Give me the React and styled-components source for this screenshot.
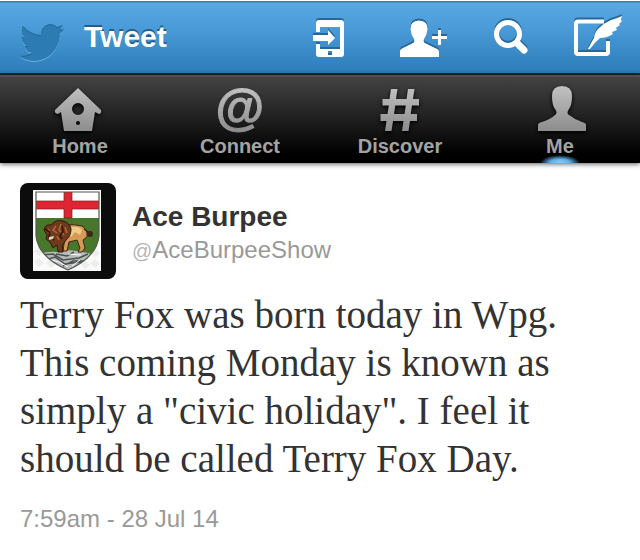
import React from "react";
import styled, { createGlobalStyle } from "styled-components";

const GlobalStyle = createGlobalStyle`
  *, *::before, *::after { box-sizing: border-box; }
  body {
    margin: 0;
    background: #fff;
    color: #333;
    font-family: "Liberation Sans", Arial, sans-serif;
  }
`;

const TopBar = styled.header`
  display: flex;
  align-items: center;
  height: 75px;
  padding: 0 17px 0 20px;
  border-top: 1px solid #fff;
  border-bottom: 2px solid #16283a;
  background: linear-gradient(#3d7f9c 0, #3d7f9c 1px, #5aa8e2 2px, #4b9cd9 35%, #2b7cb9 100%);
`;

const BirdIcon = styled.svg`
  width: 44px;
  height: 44px;
  margin-top: 12px;
  fill: #2d7bb3;
  overflow: visible;
  filter: drop-shadow(0 -1px 0 #246799) drop-shadow(0 1px 0 #68addd);
`;

const Title = styled.h1`
  margin: 0 auto 0 20px;
  color: #fff;
  font-size: 30px;
  line-height: 36px;
  text-shadow: 0 -2px 0 #245e8c;
`;

const Actions = styled.div`
  display: flex;
  gap: 47px;
`;

const IconButton = styled.button`
  display: flex;
  padding: 0;
  border: 0;
  background: none;
  color: #fff;
  cursor: pointer;

  svg {
    height: 40px;
    fill: currentColor;
    overflow: visible;
    filter: drop-shadow(0 -2px 0 #28679a);
  }
`;

const TabBar = styled.nav`
  display: grid;
  grid-template-columns: repeat(4, 1fr);
  height: 88px;
  border-top: 2px solid #4e5053;
  background: linear-gradient(#434343, #222 45%, #000 90%);
  box-shadow: 0 1px 5px rgba(0, 0, 0, 0.65);
`;

const Tab = styled.a`
  display: flex;
  flex-direction: column;
  align-items: center;
  padding-top: 9px;
  color: #a3a3a3;
  font-size: 20px;
  font-weight: bold;
  line-height: 24px;
  text-decoration: none;
  background: ${(p) =>
    p.$active
      ? "radial-gradient(ellipse 20px 8px at 50% 100%, #8bd0fb 0, #5eaee4 50%, transparent 100%)"
      : "none"};
`;

const TabIcon = styled.svg`
  width: 48px;
  height: 48px;
  overflow: visible;
  filter: drop-shadow(0 2px 2px #000);
`;

const AtSign = styled.span`
  height: 48px;
  font-size: 50px;
  line-height: 44px;
  background: linear-gradient(#c4c4c4, #898989);
  background-clip: text;
  color: transparent;
  -webkit-text-stroke: 1px transparent;
`;

const Tweet = styled.article`
  padding: 20px;
`;

const Author = styled.div`
  display: flex;
  align-items: center;
  gap: 16px;
`;

const Avatar = styled.svg`
  width: 96px;
  height: 96px;
  border-radius: 8px;
`;

const Names = styled.div`
  padding-top: 4px;
`;

const Name = styled.h2`
  margin: 0;
  font-size: 28px;
  line-height: 34px;
`;

const Handle = styled.a`
  display: block;
  color: #999;
  font-size: 24px;
  line-height: 32px;
  text-decoration: none;
`;

const HandleMark = styled.span`
  color: #b5b5b5;
  font-size: 20px;
`;

const Body = styled.p`
  margin: 12px 0 0;
  font-family: "Liberation Serif", Georgia, serif;
  font-size: 39px;
  line-height: 48px;
`;

const Time = styled.time`
  display: block;
  margin-top: 20px;
  color: #999;
  font-size: 24px;
  line-height: 32px;
`;

const PERSON =
  "M0 40V34Q0 32 3 31L13 26Q15 25 14 22Q11 18 10.500 12Q10 4 19 3.500Q28 4 27.500 12Q27 18 24 22Q23 25 25 26L35 31Q39 32 39 35V40Z";

function DeviceIcon() {
  return (
    <svg width="40" viewBox="0 0 40 40" aria-hidden="true">
      <path
        fillRule="evenodd"
        d="M3 15V6Q3 3 6 3H28Q31 3 31 6V37Q31 40 28 40H6Q3 40 3 37V27H7V32H27V10H7V15ZM15 34V38H19V34Z"
      />
      <path d="M0 18H15V13L22 21L15 28V24H0Z" />
    </svg>
  );
}

function AddPersonIcon() {
  return (
    <svg width="47" viewBox="0 0 47 40" aria-hidden="true">
      <path d={PERSON} />
      <path d="M38 13H41V19H47V22H41V28H38V22H32V19H38Z" />
    </svg>
  );
}

function SearchIcon() {
  return (
    <svg width="34" viewBox="0 0 34 40" aria-hidden="true">
      <circle cx="14" cy="17" r="11.500" fill="none" stroke="currentColor" strokeWidth="5" />
      <path d="M23 26L30 33" stroke="currentColor" strokeWidth="7" strokeLinecap="round" />
    </svg>
  );
}

function ComposeIcon() {
  return (
    <svg width="48" viewBox="0 0 48 40" aria-hidden="true">
      <path
        d="M29 4.500H3Q1 4.500 1 6.500V35Q1 37 3 37H31Q33 37 33 35V24"
        fill="none"
        stroke="currentColor"
        strokeWidth="4"
      />
      <path d="M13 32Q16 26 19 21Q20 14 24 11Q29 6 36 3Q43 1 47 -1L46 3L47 4L44 7L45 8L41 11L42 13L37 15L38 17Q32 21 25 21Q19 26 15 32Z" />
    </svg>
  );
}

function Silver() {
  return (
    <defs>
      <linearGradient id="silver" x1="0" y1="0" x2="0" y2="48" gradientUnits="userSpaceOnUse">
        <stop stopColor="#c2c2c2" />
        <stop offset="1" stopColor="#898989" />
      </linearGradient>
    </defs>
  );
}

function HomeIcon() {
  return (
    <TabIcon viewBox="0 0 48 48" aria-hidden="true">
      <Silver />
      <path
        fill="url(#silver)"
        fillRule="evenodd"
        d="M22 2L45 24Q46 27 43 28L39 26L36 45H8L5 26L2 28Q-2 27 -1 24ZM22 17A6 6 0 1 0 22 29A6 6 0 1 0 22 17ZM22 35A2 2 0 1 0 22 39A2 2 0 1 0 22 35Z"
      />
    </TabIcon>
  );
}

function HashIcon() {
  return (
    <TabIcon viewBox="0 0 48 48" aria-hidden="true">
      <path
        fill="url(#silver)"
        d="M15 3H21.500L20 13H30.500L32 3H38.500L37 13H43V19.500H36L34.700 28H41V35H34L32.500 45H26L27.500 35H17L15.500 45H9L10.500 35H4.500V28H11.500L12.800 19.500H6.500V13H13.500ZM19.300 19.500L18 28H28.500L29.800 19.500Z"
        fillRule="evenodd"
      />
    </TabIcon>
  );
}

function ProfileIcon() {
  return (
    <TabIcon viewBox="0 0 48 48" aria-hidden="true">
      <path
        fill="url(#silver)"
        d="M2 45V39Q2 37 6 36Q15 33 19 29Q22 27 19 23Q16 19 16 10Q16 0 26 0Q36 0 36 10Q36 19 33 23Q30 27 33 29Q38 33 46 36Q50 37 50 39V45Z"
      />
    </TabIcon>
  );
}

function CrestAvatar() {
  return (
    <Avatar viewBox="0 0 96 96" role="img" aria-label="Ace Burpee">
      <clipPath id="shield">
        <path d="M16 9H79V53Q77 74 48 87Q18 74 16 53Z" />
      </clipPath>
      <path fill="#0c0c0c" d="M0 0H96V96H0Z" />
      <path fill="#fafafa" d="M13 7H81V88H13Z" />
      <path fill="#ededed" d="M14 68l5-4 5 5-5 4ZM14 79l5-4 5 5-5 4ZM26 80l5-4 5 5-5 4ZM70 69l5-4 5 5-5 4ZM70 80l5-4 5 5-5 4ZM60 81l5-4 5 5-5 4Z" />
      <g clipPath="url(#shield)">
        <path fill="#fff" d="M16 8H80V35H16Z" />
        <path fill="#48772c" d="M16 35H80V88H16Z" />
        <path fill="#df2532" stroke="#801c20" strokeWidth=".7" d="M44 8H52V18H80V26H52V35H44V26H15V18H44Z" />
        <path fill="#b8bab9" d="M16 72Q28 68 37 69Q48 66 56 68L68 70L80 74V89H16Z" />
        <path
          fill="none"
          stroke="#4b5050"
          strokeWidth="1.500"
          d="M21 72L33 71L43 77L59 75L68 71M25 77L35 74L45 81L61 79M36 71L47 73L54 69M43 83L53 78L65 78"
        />
        <path fill="none" stroke="#fff" strokeWidth="1" d="M28 76L39 79L48 84M48 71L61 72M52 83L60 77" />
      </g>
      <path fill="none" stroke="#515b4c" strokeWidth="1.200" d="M16 9H79V53Q77 74 48 87Q18 74 16 53Z" />
      <path
        fill="#d69a57"
        stroke="#3a2416"
        strokeWidth="1"
        d="M45 42Q55 41 62 43Q68 47 67 54L63 57L65 65L62 69H58L60 65L57 57L49 59L47 68H43L44 61Z"
      />
      <path fill="#efca84" d="M51 44Q59 43 62 47L60 52L55 49L51 54L48 50Z" />
      <path
        fill="#70391c"
        stroke="#2b190f"
        strokeWidth="1"
        d="M24 47Q25 41 31 42Q36 36 43 38Q50 40 51 46Q51 53 46 57L42 63L43 69H38L37 62L33 65L30 59L26 56L27 52Z"
      />
      <path fill="none" stroke="#b36b35" strokeWidth="1.500" d="M36 43L33 47L37 50M41 41L39 47L44 52M37 53L39 57M45 44L47 50M28 46L31 50" />
      <path fill="none" stroke="#28170f" strokeWidth="1.500" d="M25 46L30 49L29 54L34 57M42 43L43 48L40 53L42 56" />
      <path fill="#ddd2b2" d="M29 54L34 53L33 56L29 57Z" />
      <path fill="none" stroke="#3c2515" strokeWidth="1.500" d="M64 46L70 50" />
      <ellipse cx="70" cy="51" rx="3" ry="3" fill="#3c2918" />
    </Avatar>
  );
}

const actions = [
  { label: "Send to device", Icon: DeviceIcon },
  { label: "Add person", Icon: AddPersonIcon },
  { label: "Search", Icon: SearchIcon },
  { label: "Compose", Icon: ComposeIcon },
];

export default function App() {
  return (
    <>
      <GlobalStyle />
      <TopBar>
        <BirdIcon viewBox="0 0 24 24" aria-hidden="true">
          <path d="M23.953 4.570a10 10 0 01-2.825.775 4.958 4.958 0 002.163-2.723c-.951.555-2.005.959-3.127 1.184a4.920 4.920 0 00-8.384 4.482C7.690 8.095 4.067 6.130 1.640 3.162a4.822 4.822 0 00-.666 2.475c0 1.710.870 3.213 2.188 4.096a4.904 4.904 0 01-2.228-.616v.060a4.923 4.923 0 003.946 4.827 4.996 4.996 0 01-2.212.085 4.936 4.936 0 004.604 3.417 9.867 9.867 0 01-6.102 2.105c-.390 0-.779-.023-1.170-.067a13.995 13.995 0 007.557 2.209c9.053 0 13.998-7.496 13.998-13.985 0-.210 0-.420-.015-.630A9.935 9.935 0 0024 4.590z" />
        </BirdIcon>
        <Title>Tweet</Title>
        <Actions>
          {actions.map(({ label, Icon }) => (
            <IconButton key={label} type="button" aria-label={label}>
              <Icon />
            </IconButton>
          ))}
        </Actions>
      </TopBar>
      <TabBar>
        <Tab href="#home"><HomeIcon />Home</Tab>
        <Tab href="#connect"><AtSign aria-hidden="true">@</AtSign>Connect</Tab>
        <Tab href="#discover"><HashIcon />Discover</Tab>
        <Tab href="#me" $active aria-current="page"><ProfileIcon />Me</Tab>
      </TabBar>
      <main>
        <Tweet>
          <Author>
            <CrestAvatar />
            <Names>
              <Name>Ace Burpee</Name>
              <Handle href="#profile"><HandleMark>@</HandleMark>AceBurpeeShow</Handle>
            </Names>
          </Author>
          <Body>
            Terry Fox was born today in Wpg. This coming Monday is known as simply
            a "civic holiday". I feel it should be called Terry Fox Day.
          </Body>
          <Time dateTime="2014-07-28T07:59">7:59am - 28 Jul 14</Time>
        </Tweet>
      </main>
    </>
  );
}
